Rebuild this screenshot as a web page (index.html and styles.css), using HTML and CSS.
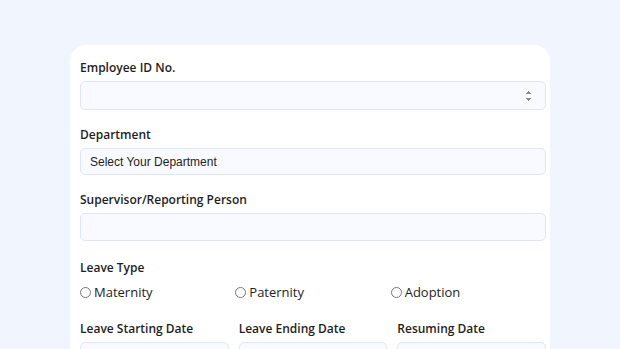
FILE: index.html
```html
<!DOCTYPE html>
<html lang="en">

<head>
    <meta charset="UTF-8">
    <meta name="viewport" content="width=device-width, initial-scale=1.0">
    <title>Leave Application</title>
    <link rel="stylesheet" href="styles.css">
</head>

<body>

    <form class="card">
        <div class="field">
            <label class="field__label" for="emp">Employee ID No.</label>
            <input class="field__input" type="number" id="emp">
        </div>

        <div class="field">
            <label class="field__label" for="dep">Department</label>
            <select class="field__input field__select" id="dep">
                <option>Select Your Department</option>
            </select>
        </div>

        <div class="field">
            <label class="field__label" for="sup">Supervisor/Reporting Person</label>
            <input class="field__input" type="text" id="sup">
        </div>

        <div class="field field--type">
            <div class="field__label">Leave Type</div>
            <div class="radios">
                <label class="radio"><input type="radio" name="type"> Maternity</label>
                <label class="radio"><input type="radio" name="type"> Paternity</label>
                <label class="radio"><input type="radio" name="type"> Adoption</label>
            </div>
        </div>

        <div class="dates">
            <div class="field">
                <label class="field__label" for="start">Leave Starting Date</label>
                <input class="field__input" type="text" id="start">
            </div>
            <div class="field">
                <label class="field__label" for="end">Leave Ending Date</label>
                <input class="field__input" type="text" id="end">
            </div>
            <div class="field">
                <label class="field__label" for="resume">Resuming Date</label>
                <input class="field__input" type="text" id="resume">
            </div>
        </div>
    </form>

</body>

</html>
```

FILE: styles.css
```css
* {
    margin: 0;
    padding: 0;
    box-sizing: border-box;
}

:root {
    --bg: #f1f5fd;
    --border: #dce7fb;
    --field: #f8faff;
    --text: #1e1e1e;
}

body {
    background: var(--bg);
    font-family: "Open Sans", sans-serif;
    color: var(--text);
    padding-top: 45px;
}

.card {
    width: 480px;
    margin-left: 70px;
    background: #fff;
    border-radius: 16px 16px 0 0;
    padding: 13px 4px 20px 10px;
}

.field {
    margin-bottom: 15px;
}

.field--type {
    padding-top: 2px;
}

.field__label {
    display: block;
    font-size: 12px;
    font-weight: 600;
    line-height: 20px;
    margin-bottom: 3px;
}

.field__input {
    display: block;
    width: 100%;
    height: 28px;
    border: 1px solid var(--border);
    border-radius: 5px;
    background: var(--field);
    outline: none;
    padding: 0 9px;
    font-family: "Liberation Sans", Arial, sans-serif;
    font-size: 12px;
    color: var(--text);
}

#emp {
    height: 29px;
}

.field__input::-webkit-inner-spin-button {
    opacity: 1;
    transform: scale(0.8);
}

.field__select {
    appearance: none;
    height: 27px;
}

.radios {
    display: grid;
    grid-template-columns: repeat(3, 1fr);
    padding-top: 1px;
}

.radio {
    display: flex;
    align-items: center;
    gap: 3px;
    font-size: 13px;
    line-height: 20px;
}

.radio input {
    width: 11px;
    height: 11px;
    margin: 0;
}

.dates {
    display: grid;
    grid-template-columns: repeat(3, 1fr);
    gap: 10px;
    padding-top: 2px;
}
```
